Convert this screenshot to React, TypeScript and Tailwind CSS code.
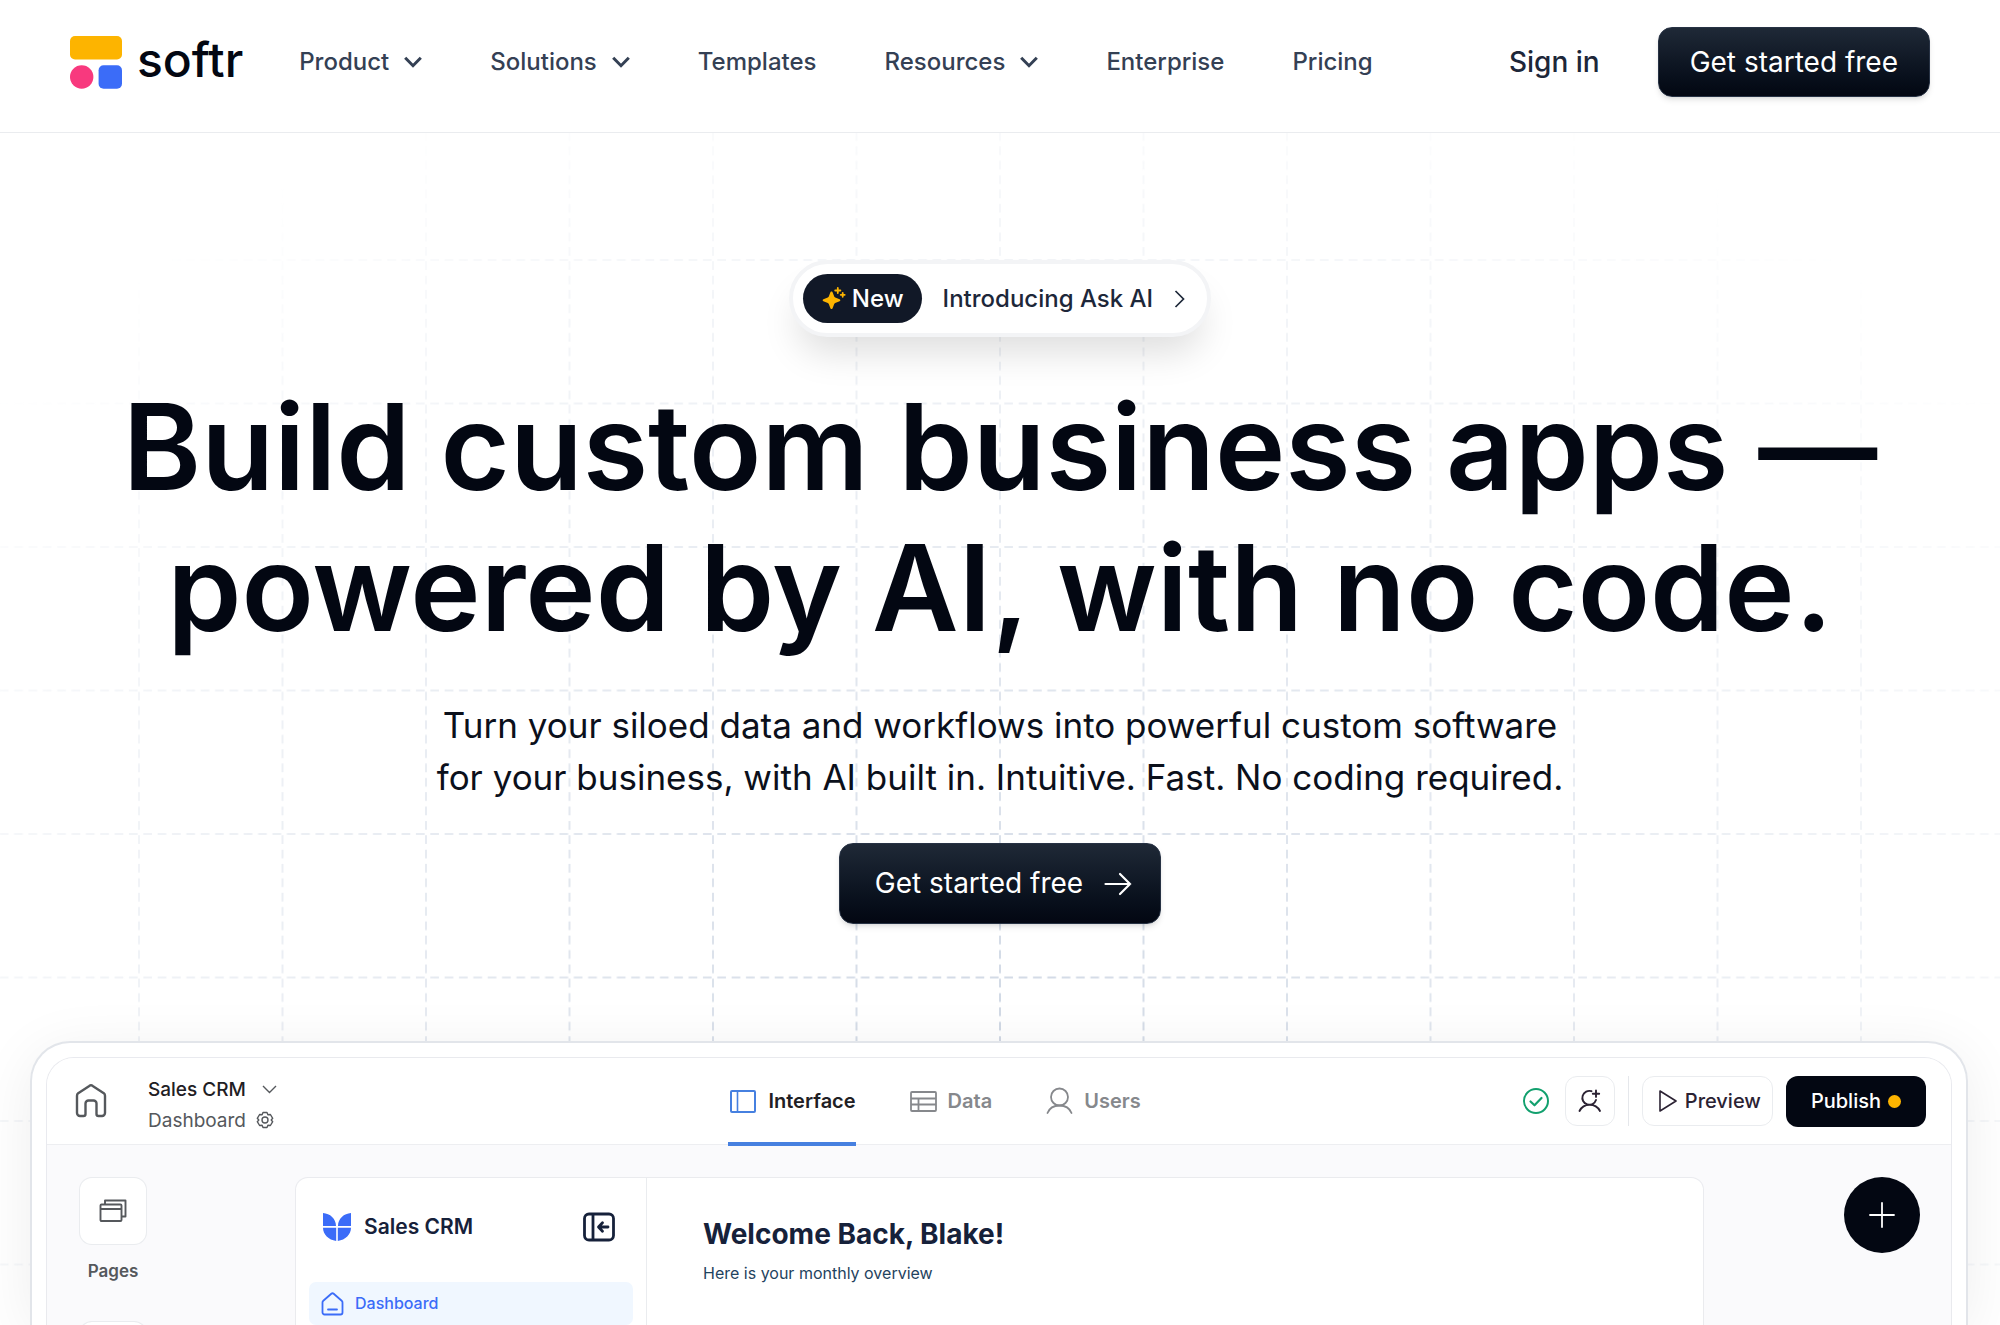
import type { ReactNode } from 'react';

type NavItem = { label: string; menu?: boolean };

const navItems: NavItem[] = [
  { label: 'Product', menu: true },
  { label: 'Solutions', menu: true },
  { label: 'Templates' },
  { label: 'Resources', menu: true },
  { label: 'Enterprise' },
  { label: 'Pricing' },
];

function Logo() {
  return (
    <a href="#" className="flex items-center gap-[15px]">
      <svg width="52" height="53" viewBox="0 0 52 53" aria-hidden="true">
        <rect width="52" height="23.5" rx="5" fill="#fdb400" />
        <circle cx="11.7" cy="41" r="11.7" fill="#f8397e" />
        <rect x="28.6" y="29.3" width="23.4" height="23.4" rx="5" fill="#3b6cf8" />
      </svg>
      <span className="pb-1 text-[48px] leading-[48px] font-medium text-[#030712]">softr</span>
    </a>
  );
}

function ChevronDown() {
  return (
    <svg width="18" height="12" viewBox="0 0 18 12" fill="none" stroke="currentColor" strokeWidth="3" aria-hidden="true">
      <path d="M1.2 1.700 9 9.700 16.800 1.700" />
    </svg>
  );
}

function Header() {
  return (
    <header className="relative flex items-center justify-between border-b border-gray-200/80 bg-white px-[70px] pt-[27px] pb-[35px]">
      <div className="flex items-center gap-[56px]">
        <Logo />
        <nav className="flex items-center gap-[68px] text-[24px] leading-[32px] font-medium text-[#344054]">
          {navItems.map((item) =>
            item.menu ? (
              <button key={item.label} type="button" className="flex items-center gap-[15px]">
                {item.label}
                <ChevronDown />
              </button>
            ) : (
              <a key={item.label} href="#">
                {item.label}
              </a>
            ),
          )}
        </nav>
      </div>
      <div className="flex items-center gap-[58px]">
        <a href="#" className="text-[28px] leading-[36px] font-medium text-[#1d2739]">
          Sign in
        </a>
        <button
          type="button"
          className="rounded-[14px] border border-[#273244] bg-linear-to-b from-[#1f2937] to-[#030712] px-[31px] py-[16px] text-[28px] leading-[36px] text-white shadow-md"
        >
          Get started free
        </button>
      </div>
    </header>
  );
}

function GridLines() {
  return (
    <svg
      className="absolute inset-0 h-full w-full mask-[radial-gradient(ellipse_64%_86%_at_50%_75%,black,transparent)]"
      aria-hidden="true"
    >
      <defs>
        <pattern id="grid" x="50%" y="127" width="143.5" height="143.5" patternUnits="userSpaceOnUse">
          <g stroke="#d1d9e5" strokeWidth="2" strokeDasharray="8.7 5.65">
            <path d="M0 1.3V143.5M143.5 1.3V143.5" />
            <path d="M4.3 0H143.5M4.3 143.5H143.5" />
          </g>
        </pattern>
      </defs>
      <rect width="100%" height="100%" fill="url(#grid)" />
    </svg>
  );
}

function Announcement() {
  return (
    <a
      href="#"
      className="flex items-center rounded-full border-4 border-gray-100 bg-white py-[10px] pr-[21px] pl-[10px] text-[24px] leading-[33px] font-medium text-[#1d2739] shadow-[0_24px_36px_-8px_rgba(0,0,0,0.13)]"
    >
      <span className="flex items-center gap-[6px] rounded-full bg-[#111827] py-[8px] pr-[18px] pl-[19px] text-white">
        <svg width="24" height="24" viewBox="0 0 24 24" fill="#fdb400" aria-hidden="true">
          <path d="M9.5 4.5c.7 0 1 .5 1.300 1.300l1.400 3.800c.2.500.500.800 1 1l3.800 1.400c.8.300 1.300.6 1.300 1.300s-.5 1-1.300 1.300l-3.800 1.400c-.5.200-.8.500-1 1l-1.400 3.800c-.3.800-.6 1.300-1.300 1.300s-1-.5-1.300-1.300L6.800 17c-.2-.5-.5-.8-1-1L2 14.600c-.8-.3-1.300-.6-1.300-1.300s.5-1 1.300-1.300l3.800-1.400c.5-.2.800-.5 1-1l1.400-3.800c.3-.8.6-1.300 1.300-1.300Z" />
          <path
            d="M15.800.9v5.200M13.200 3.500h5.200M20.700 5.800v4M18.700 7.800h4"
            fill="none"
            stroke="#fdb400"
            strokeWidth="1.800"
            strokeLinecap="round"
          />
        </svg>
        New
      </span>
      <span className="ml-[21px]">Introducing Ask AI</span>
      <svg className="ml-[21px]" width="12" height="18" viewBox="0 0 12 18" fill="none" stroke="currentColor" strokeWidth="1.700" aria-hidden="true">
        <path d="M1.500 1 9.500 9 1.500 17" />
      </svg>
    </a>
  );
}

function Hero() {
  return (
    <div className="relative flex flex-col items-center pt-[127px] text-center">
      <Announcement />
      <h1 className="mt-[40px] text-[119px] leading-[141px] font-semibold text-[#030712]">
        Build custom business apps —<br />
        powered by AI, with no code.
      </h1>
      <p className="mt-[40px] text-[35px] leading-[52px] text-[#0b101b]">
        Turn your siloed data and workflows into powerful custom software
        <br />
        for your business, with AI built in. Intuitive. Fast. No coding required.
      </p>
      <button
        type="button"
        className="mt-[40px] flex items-center gap-[21px] rounded-[14px] border border-[#273244] bg-linear-to-b from-[#1f2937] to-[#030712] py-[22px] pr-[28px] pl-[35px] text-[28px] leading-[35px] text-white shadow-md"
      >
        Get started free
        <svg width="28" height="24" viewBox="0 0 28 24" fill="none" stroke="currentColor" strokeWidth="2.200" strokeLinecap="round" aria-hidden="true">
          <path d="M1.500 12h24.500M16 2l10 10-10 10" />
        </svg>
      </button>
    </div>
  );
}

function Tab({ label, icon, active = false }: { label: string; icon: ReactNode; active?: boolean }) {
  return (
    <button
      type="button"
      className={
        active
          ? 'relative flex items-center gap-[11px] self-stretch text-[#1f2024] after:absolute after:inset-x-0 after:-bottom-[2px] after:h-[4px] after:bg-[#4680e0]'
          : 'relative flex items-center gap-[11px] self-stretch text-[#86888c]'
      }
    >
      {icon}
      {label}
    </button>
  );
}

function AppTopBar() {
  return (
    <div className="grid grid-cols-[5fr_auto_6fr] items-center border-b border-gray-200/70 bg-white pr-[25px] pl-[27px]">
      <div className="flex items-center gap-[40px]">
        <button type="button" aria-label="Home" className="text-[#55585c]">
          <svg width="34" height="36" viewBox="0 0 34 36" fill="none" stroke="currentColor" strokeWidth="2.400" strokeLinejoin="round" aria-hidden="true">
            <path d="M3 12.800c0-1 .4-1.900 1.200-2.600L15.300 2.900c1-.9 2.400-.9 3.400 0l11.100 7.300c.8.700 1.200 1.600 1.200 2.600V30a3 3 0 0 1-3 3h-3.500a2 2 0 0 1-2-2V20.500a3 3 0 0 0-3-3h-5a3 3 0 0 0-3 3V31a2 2 0 0 1-2 2H6a3 3 0 0 1-3-3Z" />
          </svg>
        </button>
        <div className="pt-[7px] text-[19px] leading-[31px]">
          <button type="button" className="flex items-center gap-[16px] font-medium text-[#1f2024]">
            Sales CRM
            <svg width="15" height="9" viewBox="0 0 15 9" fill="none" stroke="#55585c" strokeWidth="1.400" aria-hidden="true">
              <path d="M1 1l6.500 6.500L14 1" />
            </svg>
          </button>
          <button type="button" className="flex items-center gap-[10px] text-[#55585c]">
            Dashboard
            <svg width="18" height="18" viewBox="0 0 18 18" fill="none" stroke="currentColor" strokeWidth="1.400" strokeLinejoin="round" aria-hidden="true">
              <circle cx="9" cy="9" r="3" />
              <path d="M7 1.500h4l.9 2.300 2.500-.3 2.300 3.800L15.200 9l1.500 1.700-2.300 3.800-2.500-.3-.9 2.300H7l-.9-2.300-2.500.3-2.300-3.800L2.800 9 1.300 7.300l2.300-3.800 2.500.3Z" />
            </svg>
          </button>
        </div>
      </div>

      <div className="flex h-[86px] items-center gap-[54px] text-[20px] leading-[28px] font-semibold">
        <Tab
          active
          label="Interface"
          icon={
            <svg width="29" height="26" viewBox="0 0 29 26" fill="none" stroke="#4680e0" strokeWidth="2" aria-hidden="true">
              <rect x="3" y="3" width="24" height="21" rx="1" />
              <path d="M9.500 3v21" strokeWidth="1.600" />
            </svg>
          }
        />
        <Tab
          label="Data"
          icon={
            <svg width="27" height="26" viewBox="0 0 27 26" fill="none" stroke="currentColor" strokeWidth="1.800" aria-hidden="true">
              <rect x="1" y="4" width="25" height="19" rx="1" />
              <path d="M1 10.500h25M1 16.500h25M8.500 10.500v12.500" />
            </svg>
          }
        />
        <Tab
          label="Users"
          icon={
            <svg width="27" height="28" viewBox="0 0 27 28" fill="none" stroke="currentColor" strokeWidth="1.800" strokeLinecap="round" aria-hidden="true">
              <circle cx="13.500" cy="10" r="8.500" />
              <path d="M1.500 26c2-5 6.500-7.500 12-7.500s10 2.500 12 7.500" />
            </svg>
          }
        />
      </div>

      <div className="flex items-center justify-end gap-[13px] text-[20px] leading-[28px] font-medium">
        <svg className="mr-[2px]" width="28" height="28" viewBox="0 0 28 28" fill="none" stroke="#12a06e" strokeWidth="2" aria-hidden="true">
          <circle cx="14" cy="14" r="12" />
          <path d="M8.500 14.500l4 3.800 7-7.300" strokeWidth="2.200" strokeLinecap="round" strokeLinejoin="round" />
        </svg>
        <button type="button" aria-label="Invite user" className="flex size-[50px] items-center justify-center rounded-[12px] border border-gray-200/80 text-[#2b2233]">
          <svg width="24" height="24" viewBox="0 0 24 24" fill="none" stroke="currentColor" strokeWidth="1.900" strokeLinecap="round" aria-hidden="true">
            <path d="M13.500 2.200A7 7 0 1 0 18 11M1.500 22c2-4 5.800-6.300 10-6.300s8.500 2.300 10.500 6.300M18 1.500v6.400M14.800 4.700h6.400" />
          </svg>
        </button>
        <div className="h-[50px] w-px bg-gray-200" />
        <button type="button" className="flex h-[50px] items-center gap-[8px] rounded-[12px] border border-gray-200/80 pr-[11px] pl-[16px] text-[#2b2233]">
          <svg width="18" height="24" viewBox="0 0 18 24" fill="none" stroke="currentColor" strokeWidth="1.600" strokeLinejoin="round" aria-hidden="true">
            <path d="M1 2l16 10L1 22Z" />
          </svg>
          Preview
        </button>
        <button type="button" className="flex h-[51px] items-center gap-[7px] rounded-[12px] bg-[#030712] px-[25px] text-white">
          Publish
          <span className="size-[13px] rounded-full bg-[#fdb400]" />
        </button>
      </div>
    </div>
  );
}

function ToolRail() {
  return (
    <div className="flex w-[68px] shrink-0 flex-col items-center">
      <button type="button" className="flex flex-col items-center text-[17px] leading-[24px] font-semibold text-[#55585c]">
        <span className="flex size-[68px] items-center justify-center rounded-[13px] border border-gray-200/80 bg-white">
          <svg width="28" height="24" viewBox="0 0 28 24" fill="none" stroke="currentColor" strokeWidth="1.900" strokeLinejoin="round" aria-hidden="true">
            <path d="M6 5.500V1.500h20.500v16h-4" />
            <rect x="1.500" y="5.500" width="21" height="16.500" rx="1" />
            <path d="M1.500 10h21" />
          </svg>
        </span>
        <span className="mt-[14px]">Pages</span>
      </button>
      <button type="button" aria-label="Next tool" className="mt-[38px] size-[68px] shrink-0 rounded-[13px] border border-gray-200/80 bg-white" />
    </div>
  );
}

function CrmPreview() {
  return (
    <div className="mr-[140px] ml-[148px] flex flex-1 overflow-hidden rounded-t-[13px] border border-b-0 border-gray-200/80 bg-white">
      <aside className="w-[351px] shrink-0 border-r border-gray-200/80 px-[13px] text-[#16213a]">
        <div className="flex items-center pt-[33px] pr-[18px] pl-[13px] text-[21px] leading-[32px] font-semibold">
          <svg width="30" height="30" viewBox="0 0 30 30" fill="#3b6cf8" aria-hidden="true">
            <path d="M1 1c7 .5 13 5.500 13 13H1ZM29 1c-7 .5-13 5.500-13 13h13ZM1 15.800h13.200V29C6.500 28 1 22.500 1 15.800ZM29 15.800H15.800V29C23.500 28 29 22.500 29 15.800Z" />
          </svg>
          <span className="ml-[12px]">Sales CRM</span>
          <button type="button" aria-label="Collapse sidebar" className="ml-auto">
            <svg width="32" height="30" viewBox="0 0 32 30" fill="none" stroke="currentColor" strokeWidth="2.800" strokeLinecap="round" strokeLinejoin="round" aria-hidden="true">
              <rect x="1.500" y="2" width="29" height="26" rx="4.500" />
              <path d="M10 2.500v25" />
              <path d="M25 15h-9M19.500 10.800 15.500 15l4 4.200" />
            </svg>
          </button>
        </div>
        <a href="#" className="mt-[39px] flex items-center gap-[11px] rounded-[7px] bg-[#f0f7ff] py-[9px] pl-[12px] text-[16px] leading-[25px] font-medium text-[#3b6cf8]">
          <svg width="23" height="24" viewBox="0 0 23 24" fill="none" stroke="currentColor" strokeWidth="1.800" strokeLinecap="round" strokeLinejoin="round" aria-hidden="true">
            <path d="M1.500 10.500c0-.7.300-1.300.8-1.700l8-7c.7-.6 1.700-.6 2.400 0l8 7c.5.400.8 1 .8 1.700V20.500a2 2 0 0 1-2 2h-16a2 2 0 0 1-2-2ZM7 17.500h9" />
          </svg>
          Dashboard
        </a>
      </aside>
      <div className="px-[56px] pt-[38px]">
        <h2 className="text-[28px] leading-[36px] font-bold text-[#16213a]">Welcome Back, Blake!</h2>
        <p className="mt-[9px] text-[16px] leading-[24px] text-[#1f4360]">Here is your monthly overview</p>
      </div>
    </div>
  );
}

function AppWindow() {
  return (
    <div className="relative mr-[32px] ml-[30px] mt-[117px] flex min-h-0 flex-1 flex-col rounded-t-[40px] border-2 border-b-0 border-[#e2e5ea] bg-white px-[14px] pt-[14px] shadow-[0_10px_60px_rgba(0,0,0,0.07)]">
      <div className="flex min-h-0 flex-1 flex-col overflow-hidden rounded-t-[28px] border border-b-0 border-gray-200/80 bg-[#fafafc]">
        <AppTopBar />
        <div className="flex min-h-0 flex-1 items-stretch pt-[32px] pr-[31px] pl-[32px]">
          <ToolRail />
          <CrmPreview />
          <button type="button" aria-label="Add block" className="flex size-[76px] shrink-0 items-center justify-center rounded-full bg-[#030712] text-white">
            <svg width="26" height="26" viewBox="0 0 26 26" stroke="currentColor" strokeWidth="1.800" strokeLinecap="round" aria-hidden="true">
              <path d="M13 1v24M1 13h24" />
            </svg>
          </button>
        </div>
      </div>
    </div>
  );
}

export default function App() {
  return (
    <div className="flex h-screen flex-col overflow-hidden bg-white font-['Inter',sans-serif]">
      <Header />
      <main className="relative flex min-h-0 flex-1 flex-col">
        <GridLines />
        <Hero />
        <AppWindow />
      </main>
    </div>
  );
}
